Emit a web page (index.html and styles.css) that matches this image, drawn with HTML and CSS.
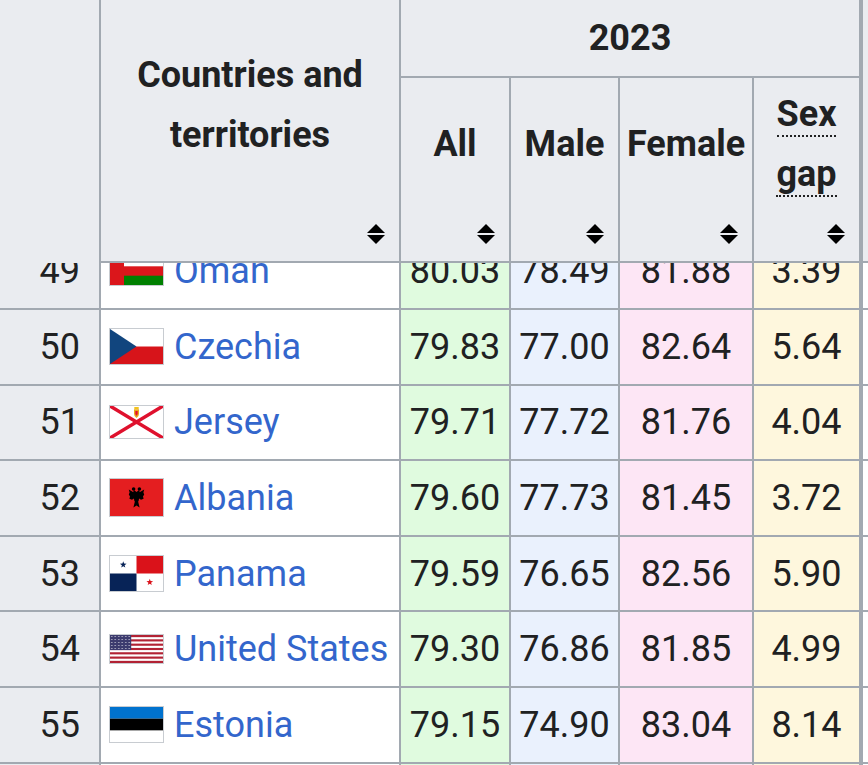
FILE: index.html
```html
<!DOCTYPE html>
<html lang="en">
<head>
<meta charset="utf-8">
<title>Life expectancy 2023</title>
<link rel="stylesheet" href="styles.css">
</head>
<body>
<table class="lt">
  <colgroup>
    <col class="c-rank"><col class="c-country"><col class="c-all"><col class="c-male"><col class="c-female"><col class="c-gap"><col class="c-more">
  </colgroup>
  <thead>
    <tr class="h1">
      <th rowspan="2" class="rank-h"></th>
      <th rowspan="2" class="sortable">Countries and territories<svg class="sort" viewBox="0 0 18 20"><polygon points="0,9 9,0 18,9"/><polygon points="0,11 18,11 9,20"/></svg></th>
      <th colspan="4" class="year">2023</th>
      <th rowspan="2" class="more-h"></th>
    </tr>
    <tr class="h2">
      <th class="sortable">All<svg class="sort" viewBox="0 0 18 20"><polygon points="0,9 9,0 18,9"/><polygon points="0,11 18,11 9,20"/></svg></th>
      <th class="sortable">Male<svg class="sort" viewBox="0 0 18 20"><polygon points="0,9 9,0 18,9"/><polygon points="0,11 18,11 9,20"/></svg></th>
      <th class="sortable">Female<svg class="sort" viewBox="0 0 18 20"><polygon points="0,9 9,0 18,9"/><polygon points="0,11 18,11 9,20"/></svg></th>
      <th class="sortable"><abbr class="abbr" title="Female minus male life expectancy">Sex gap</abbr><svg class="sort" viewBox="0 0 18 20"><polygon points="0,9 9,0 18,9"/><polygon points="0,11 18,11 9,20"/></svg></th>
    </tr>
  </thead>
  <tbody>
    <tr class="cut">
      <td class="rank"><div class="cut-box"><div class="cut-in">49</div></div></td>
      <td class="country"><div class="cut-box"><div class="cut-in"><div class="ctry">
        <svg class="flag" width="53" height="28" viewBox="0 0 53 28"><rect width="53" height="28" fill="#db161b"/><rect x="14" width="39" height="9.3" fill="#fff"/><rect x="14" y="18.7" width="39" height="9.3" fill="#008000"/><path d="M5,2 l2,2 l2,-2 l-1,3 l-2,0z" fill="#fff"/></svg>
        <a href="#">Oman</a></div></div></div></td>
      <td class="all"><div class="cut-box"><div class="cut-in">80.03</div></div></td>
      <td class="male"><div class="cut-box"><div class="cut-in">78.49</div></div></td>
      <td class="female"><div class="cut-box"><div class="cut-in">81.88</div></div></td>
      <td class="gap"><div class="cut-box"><div class="cut-in">3.39</div></div></td>
      <td class="more"></td>
    </tr>
    <tr>
      <td class="rank">50</td>
      <td class="country"><div class="ctry">
        <svg class="flag" width="53" height="35" viewBox="0 0 53 35"><rect width="53" height="35" fill="#d7141a"/><rect width="53" height="17.5" fill="#fff"/><polygon points="0,0 26.5,17.5 0,35" fill="#11457e"/></svg>
        <a href="#">Czechia</a></div></td>
      <td class="all">79.83</td><td class="male">77.00</td><td class="female">82.64</td><td class="gap">5.64</td><td class="more"></td>
    </tr>
    <tr>
      <td class="rank">51</td>
      <td class="country"><div class="ctry">
        <svg class="flag" width="53" height="32" viewBox="0 0 53 32"><rect width="53" height="32" fill="#fff"/><path d="M0,0 L53,32 M53,0 L0,32" stroke="#df112d" stroke-width="3.5"/><rect x="24.3" y="1" width="4.4" height="2" fill="#f2c31b"/><path d="M24,3.2 h5 v4.5 q0,3 -2.5,4.3 q-2.5,-1.3 -2.5,-4.3z" fill="#e8a81c"/><path d="M25.3,5 h2.4 v2.5 q0,1.6 -1.2,2.3 q-1.2,-0.7 -1.2,-2.3z" fill="#e8112d"/></svg>
        <a href="#">Jersey</a></div></td>
      <td class="all">79.71</td><td class="male">77.72</td><td class="female">81.76</td><td class="gap">4.04</td><td class="more"></td>
    </tr>
    <tr>
      <td class="rank">52</td>
      <td class="country"><div class="ctry">
        <svg class="flag" width="53" height="37" viewBox="0 0 53 37"><rect width="53" height="37" fill="#e41e20"/><g fill="#000"><circle cx="23.6" cy="10" r="1.8"/><circle cx="29.4" cy="10" r="1.8"/><polygon points="24,11 26.5,13 29,11 30.2,14 28.6,22 26.5,24 24.4,22 22.8,14"/><polygon points="23,13 18.8,10.5 19.6,13.5 18.8,15.5 20,17.5 19.4,19.8 22,20.8 24.6,19"/><polygon points="30,13 34.2,10.5 33.4,13.5 34.2,15.5 33,17.5 33.6,19.8 31,20.8 28.4,19"/><polygon points="25,22 28,22 29.6,28.5 26.5,26.5 23.4,28.5"/></g></svg>
        <a href="#">Albania</a></div></td>
      <td class="all">79.60</td><td class="male">77.73</td><td class="female">81.45</td><td class="gap">3.72</td><td class="more"></td>
    </tr>
    <tr>
      <td class="rank">53</td>
      <td class="country"><div class="ctry">
        <svg class="flag" width="53" height="35" viewBox="0 0 53 35"><rect width="53" height="35" fill="#fff"/><rect x="26.5" width="26.5" height="17.5" fill="#da121a"/><rect y="17.5" width="26.5" height="17.5" fill="#072357"/><polygon transform="translate(13.25,8.75)" fill="#072357" points="0,-3.5 0.82,-1.13 3.33,-1.08 1.33,0.43 2.06,2.83 0,1.4 -2.06,2.83 -1.33,0.43 -3.33,-1.08 -0.82,-1.13"/><polygon transform="translate(39.75,26.25)" fill="#da121a" points="0,-3.5 0.82,-1.13 3.33,-1.08 1.33,0.43 2.06,2.83 0,1.4 -2.06,2.83 -1.33,0.43 -3.33,-1.08 -0.82,-1.13"/></svg>
        <a href="#">Panama</a></div></td>
      <td class="all">79.59</td><td class="male">76.65</td><td class="female">82.56</td><td class="gap">5.90</td><td class="more"></td>
    </tr>
    <tr>
      <td class="rank">54</td>
      <td class="country"><div class="ctry">
        <svg class="flag" width="53" height="28" viewBox="0 0 53 28"><defs><pattern id="usstars" width="3.5" height="3" patternUnits="userSpaceOnUse"><circle cx="1.75" cy="1.5" r="0.55" fill="#fff"/></pattern></defs><rect width="53" height="28" fill="#b22234"/><g fill="#fff"><rect y="2.154" width="53" height="2.154"/><rect y="6.462" width="53" height="2.154"/><rect y="10.769" width="53" height="2.154"/><rect y="15.077" width="53" height="2.154"/><rect y="19.385" width="53" height="2.154"/><rect y="23.692" width="53" height="2.154"/></g><rect width="21.2" height="15.08" fill="#3c3b6e"/><rect width="21.2" height="15.08" fill="url(#usstars)"/></svg>
        <a href="#">United States</a></div></td>
      <td class="all">79.30</td><td class="male">76.86</td><td class="female">81.85</td><td class="gap">4.99</td><td class="more"></td>
    </tr>
    <tr>
      <td class="rank">55</td>
      <td class="country"><div class="ctry">
        <svg class="flag" width="53" height="35" viewBox="0 0 53 35"><rect width="53" height="35" fill="#fff"/><rect width="53" height="11.67" fill="#0072ce"/><rect y="11.67" width="53" height="11.67" fill="#000"/></svg>
        <a href="#">Estonia</a></div></td>
      <td class="all">79.15</td><td class="male">74.90</td><td class="female">83.04</td><td class="gap">8.14</td><td class="more"></td>
    </tr>
    <tr>
      <td class="rank"></td><td class="country"></td><td class="all"></td><td class="male"></td><td class="female"></td><td class="gap"></td><td class="more"></td>
    </tr>
  </tbody>
</table>
</body>
</html>
```
FILE: styles.css
```css
html, body {
  margin: 0;
  padding: 0;
  overflow: hidden;
  background: #ffffff;
}

body {
  font-family: Roboto, "Liberation Sans", sans-serif;
  color: #202122;
}

.lt {
  border-collapse: collapse;
  table-layout: fixed;
  width: 961px;
  font-size: 36px;
}

.c-rank { width: 100px; }
.c-country { width: 300px; }
.c-all { width: 110px; }
.c-male { width: 109px; }
.c-female { width: 134px; }
.c-gap { width: 108px; }
.c-more { width: 100px; }

.lt th,
.lt td {
  border: 2px solid #a2a9b1;
}

.lt th {
  background: #eaecf0;
  font-weight: 700;
  line-height: 60px;
  text-align: center;
  vertical-align: middle;
  padding: 0 6px;
}

.lt .h1 th {
  border-top-style: hidden;
}

.h1 {
  height: 77px;
}

.h2 {
  height: 185px;
}

.lt th.rank-h {
  border-left-style: hidden;
  border-bottom-style: hidden;
}

.lt th.sortable {
  position: relative;
  padding: 4px 6px 55px;
}

.sort {
  position: absolute;
  right: 14px;
  bottom: 17px;
  width: 18px;
  height: 20px;
  fill: #000;
}

.abbr {
  text-decoration: none;
  border-bottom: 2px dotted #202122;
}

.lt .more-h,
.lt .more {
  border-left-width: 4px;
}

.lt tbody tr {
  height: 75.6px;
}

.lt td {
  padding: 0 4px;
  text-align: center;
  vertical-align: middle;
  line-height: 42px;
}

.lt td.rank {
  background: #eaecf0;
  text-align: right;
  padding-right: 19px;
  border-left-style: hidden;
}

.lt tr.cut td.rank {
  border-top-style: hidden;
}

.lt td.country {
  text-align: left;
  padding-left: 8px;
}

.all { background: #e0fbdf; }
.male { background: #eaf1fd; }
.female { background: #fde6f5; }
.gap { background: #fef7dd; }
.more { background: #ffffff; }

.lt tr.cut {
  height: 45px;
}

.lt tr.cut td {
  padding-top: 0;
  padding-bottom: 0;
}

.cut-box {
  height: 45px;
  overflow: hidden;
}

.cut-in {
  height: 73.6px;
  margin-top: -28.6px;
  display: flex;
  flex-direction: column;
  justify-content: center;
}

.ctry {
  display: flex;
  align-items: center;
  gap: 10px;
}

.flag {
  display: block;
  flex: none;
  border: 1px solid #c8ccd1;
}

.ctry a {
  color: #3366cc;
  text-decoration: none;
  white-space: nowrap;
}
```
